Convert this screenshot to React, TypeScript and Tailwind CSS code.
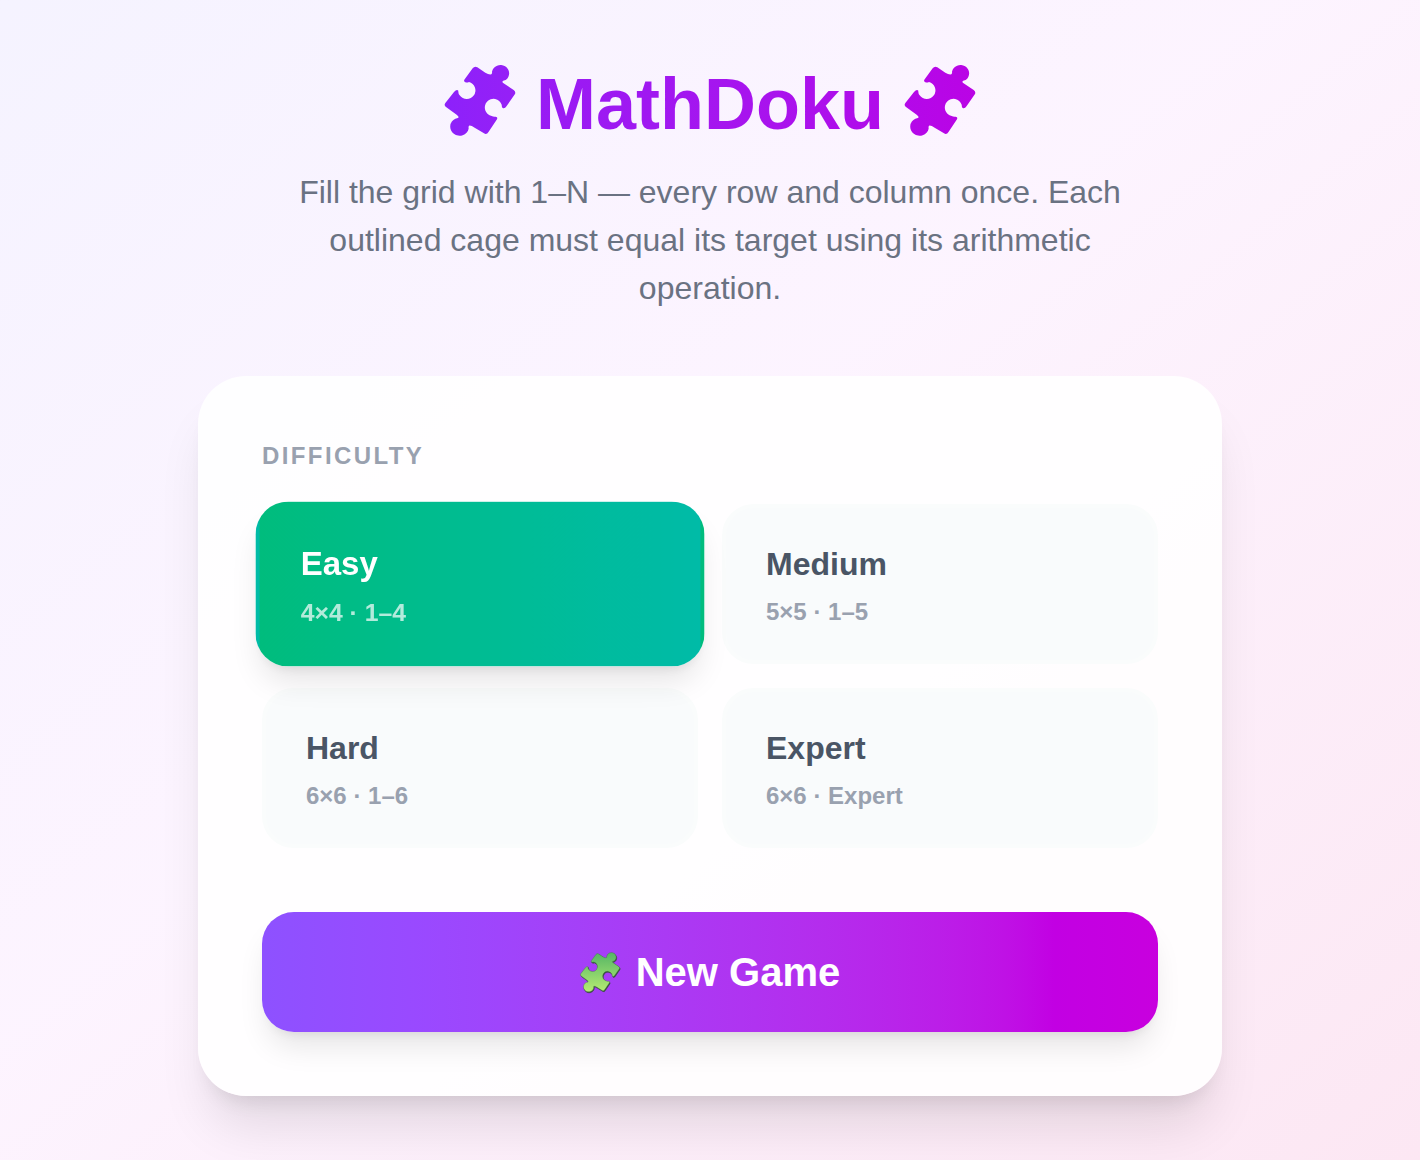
import { useState } from "react";
import clsx from "clsx";

interface Level {
  id: string;
  name: string;
  detail: string;
}

const LEVELS: Level[] = [
  { id: "easy", name: "Easy", detail: "4×4 · 1–4" },
  { id: "medium", name: "Medium", detail: "5×5 · 1–5" },
  { id: "hard", name: "Hard", detail: "6×6 · 1–6" },
  { id: "expert", name: "Expert", detail: "6×6 · Expert" },
];

const PIECE =
  "M130 57Q136 49 144 54L168 70Q179 77 186 75Q189 73 188 67A26 25 0 1 1 229 92Q219 94 219 97Q219 100 225 103L253 122Q260 127 257 134L232 170Q226 179 220 176Q217 173 217 166A26 26 0 1 0 187 200Q192 203 199 202Q206 203 203 210L178 247Q172 257 164 252L136 235Q124 227 119 229Q117 231 118 238A28 27 0 1 1 78 208Q88 207 88 204Q88 201 82 196L50 173Q43 168 48 161L74 128Q82 119 87 124Q86 132 91 138A26 26 0 1 0 119 98Q112 101 107 98Q102 96 106 90Z";

interface PieceProps {
  id: string;
  from: string;
  to: string;
  className: string;
  glossy?: boolean;
}

function PuzzlePiece({ id, from, to, className, glossy }: PieceProps) {
  return (
    <svg viewBox="44 44 216 216" className={className} aria-hidden="true">
      <defs>
        <linearGradient id={id} x1="0" y1="0" x2={glossy ? "0" : "1"} y2={glossy ? "1" : "0"}>
          <stop offset="0" stopColor={from} />
          <stop offset="1" stopColor={to} />
        </linearGradient>
      </defs>
      {glossy && <path d={PIECE} fill="#34503a" stroke="#34503a" strokeWidth="3" transform="translate(3 5)" />}
      <path d={PIECE} fill={`url(#${id})`} />
      {glossy && <path d={PIECE} fill="none" stroke="#406b46" strokeOpacity="0.5" strokeWidth="4" />}
    </svg>
  );
}

export default function App() {
  const [level, setLevel] = useState("easy");

  return (
    <main className="min-h-screen bg-linear-to-br from-violet-50 via-fuchsia-50 via-45% to-pink-100 px-8 py-16 font-['Liberation_Sans',Arial,sans-serif]">
      <header className="mx-auto mb-16 max-w-5xl text-center">
        <div className="mb-6 flex items-start justify-center gap-5">
          <PuzzlePiece id="piece-left" from="#8d21fa" to="#9620f6" className="size-18" />
          <h1 className="bg-linear-to-r from-[#981bf4] to-[#b10aea] bg-clip-text text-[72px] leading-20 font-bold text-transparent">
            MathDoku
          </h1>
          <PuzzlePiece id="piece-right" from="#b408e9" to="#ba04e5" className="size-18" />
        </div>
        <p className="mx-auto max-w-4xl text-[32px] leading-12 text-gray-500">
          Fill the grid with 1–N — every row and column once. Each outlined cage must equal its target using its
          arithmetic operation.
        </p>
      </header>

      <section className="mx-auto max-w-5xl rounded-[48px] bg-white/90 p-16 shadow-[0_40px_50px_-10px_rgb(0_0_0/0.1),0_16px_20px_-12px_rgb(0_0_0/0.1)]">
        <h2 className="mb-8 text-2xl font-bold tracking-widest text-gray-400 uppercase">Difficulty</h2>

        <div className="mb-16 grid grid-cols-2 gap-6">
          {LEVELS.map(({ id, name, detail }) => {
            const active = id === level;
            return (
              <button
                key={id}
                type="button"
                aria-pressed={active}
                onClick={() => setLevel(id)}
                className={clsx(
                  "rounded-[32px] border-4 px-10 py-8 text-left font-bold",
                  active
                    ? "z-10 scale-103 border-transparent bg-linear-to-r from-emerald-500 to-teal-500 text-white shadow-[0_20px_30px_-6px_rgb(0_0_0/0.1),0_8px_12px_-8px_rgb(0_0_0/0.1)]"
                    : "border-[#fafcfc] bg-[#f9fbfc] text-gray-600"
                )}
              >
                <span className="block text-[32px] leading-12">{name}</span>
                <span className={clsx("mt-2 block text-2xl", active ? "text-white/70" : "text-gray-400")}>
                  {detail}
                </span>
              </button>
            );
          })}
        </div>

        <button
          type="button"
          className="flex w-full items-center justify-center gap-4 rounded-[32px] bg-linear-to-r from-violet-500 to-fuchsia-600 py-8 text-[40px] leading-14 font-bold text-white shadow-[0_20px_30px_-6px_rgb(0_0_0/0.1),0_8px_12px_-8px_rgb(0_0_0/0.1)]"
        >
          <PuzzlePiece id="piece-new" from="#55b565" to="#b5ec72" className="size-10 overflow-visible" glossy />
          New Game
        </button>
      </section>
    </main>
  );
}
